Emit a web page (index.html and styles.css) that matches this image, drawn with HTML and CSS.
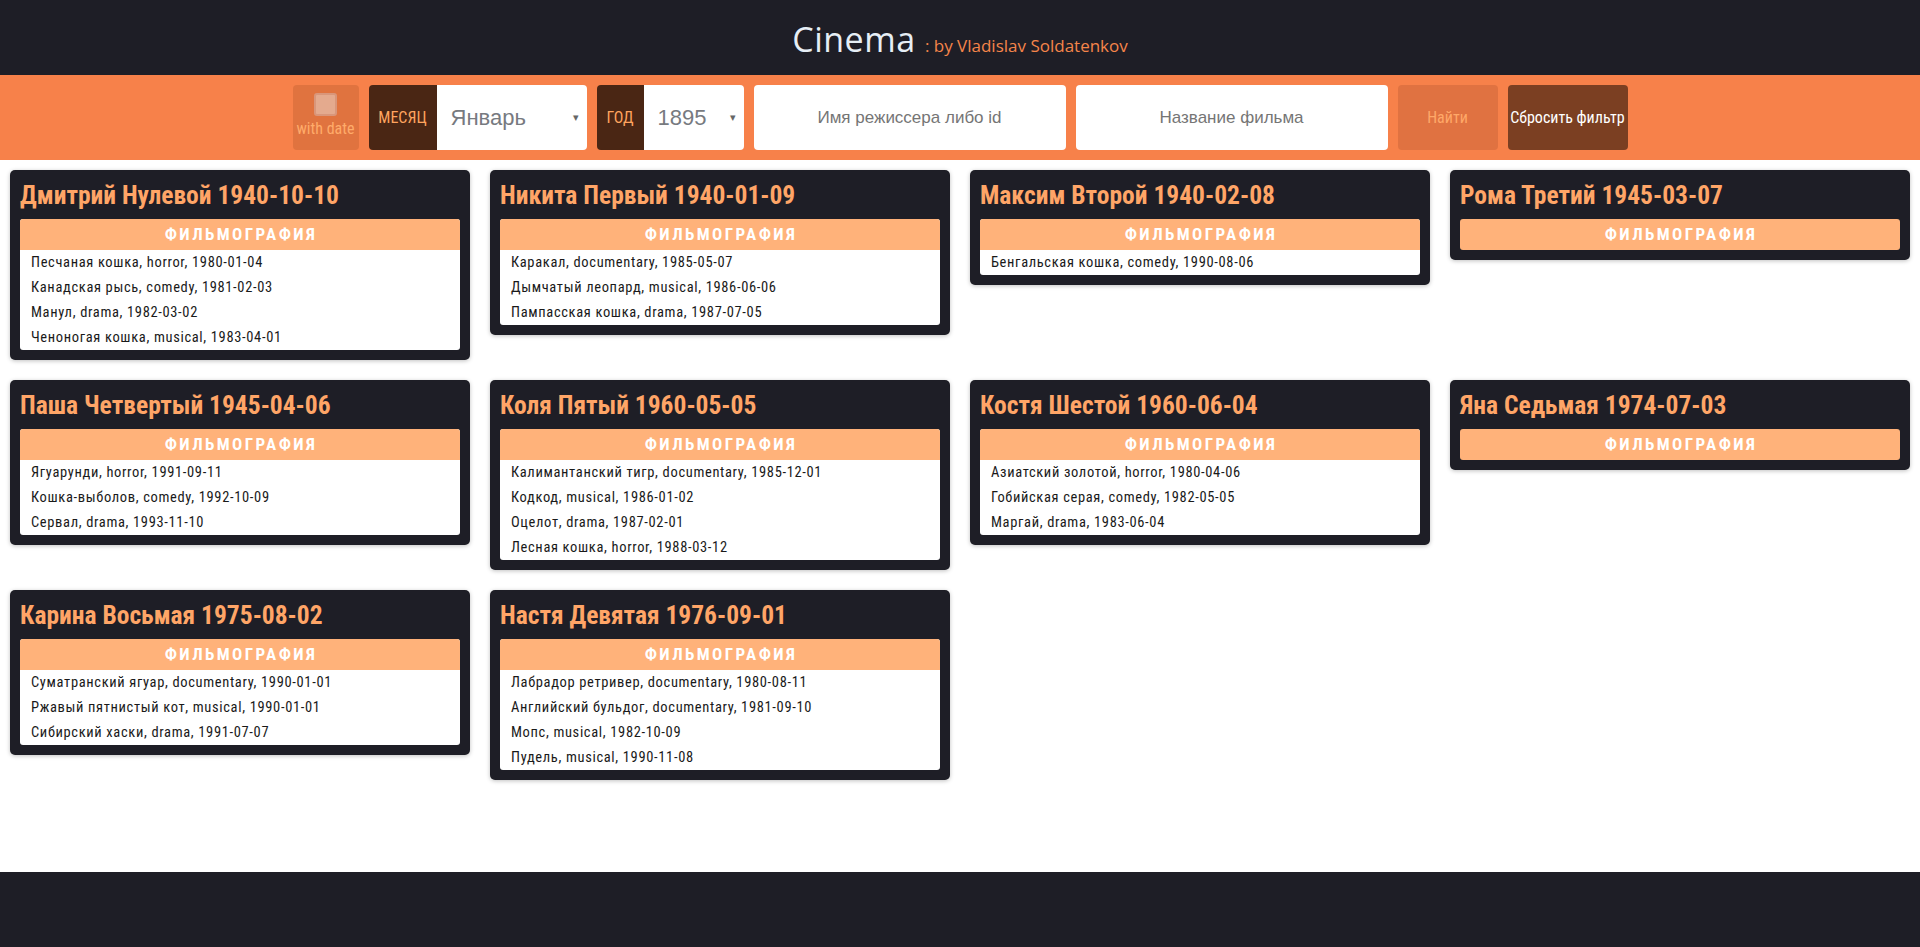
FILE: index.html
```html
<!DOCTYPE html>
<html lang="ru">
<head>
<meta charset="utf-8">
<title>Cinema</title>
<link rel="stylesheet" href="styles.css">
</head>
<body>
<div class="page">
  <header class="topbar">
    <h1 class="logo">Cinema <span class="logo-sub">: by Vladislav Soldatenkov</span></h1>
  </header>
  <nav class="filters">
    <label class="withdate">
      <span class="box"></span>
      <span class="withdate-text">with date</span>
    </label>
    <div class="select-group month">
      <span class="select-label">МЕСЯЦ</span>
      <div class="select-box"><span class="select-value">Январь</span><span class="caret">▾</span></div>
    </div>
    <div class="select-group year">
      <span class="select-label">ГОД</span>
      <div class="select-box"><span class="select-value">1895</span><span class="caret">▾</span></div>
    </div>
    <div class="text-input">Имя режиссера либо id</div>
    <div class="text-input">Название фильма</div>
    <button class="btn btn-find">Найти</button>
    <button class="btn btn-reset">Сбросить фильтр</button>
  </nav>
  <main class="cards">
    <section class="card">
      <h2 class="card-title">Дмитрий Нулевой 1940-10-10</h2>
      <div class="films">
        <div class="films-head">ФИЛЬМОГРАФИЯ</div>
        <ul class="films-list">
          <li>Песчаная кошка, horror, 1980-01-04</li>
          <li>Канадская рысь, comedy, 1981-02-03</li>
          <li>Манул, drama, 1982-03-02</li>
          <li>Ченоногая кошка, musical, 1983-04-01</li>
        </ul>
      </div>
    </section>
    <section class="card">
      <h2 class="card-title">Никита Первый 1940-01-09</h2>
      <div class="films">
        <div class="films-head">ФИЛЬМОГРАФИЯ</div>
        <ul class="films-list">
          <li>Каракал, documentary, 1985-05-07</li>
          <li>Дымчатый леопард, musical, 1986-06-06</li>
          <li>Пампасская кошка, drama, 1987-07-05</li>
        </ul>
      </div>
    </section>
    <section class="card">
      <h2 class="card-title">Максим Второй 1940-02-08</h2>
      <div class="films">
        <div class="films-head">ФИЛЬМОГРАФИЯ</div>
        <ul class="films-list">
          <li>Бенгальская кошка, comedy, 1990-08-06</li>
        </ul>
      </div>
    </section>
    <section class="card">
      <h2 class="card-title">Рома Третий 1945-03-07</h2>
      <div class="films">
        <div class="films-head">ФИЛЬМОГРАФИЯ</div>
        <ul class="films-list"></ul>
      </div>
    </section>
    <section class="card">
      <h2 class="card-title">Паша Четвертый 1945-04-06</h2>
      <div class="films">
        <div class="films-head">ФИЛЬМОГРАФИЯ</div>
        <ul class="films-list">
          <li>Ягуарунди, horror, 1991-09-11</li>
          <li>Кошка-выболов, comedy, 1992-10-09</li>
          <li>Сервал, drama, 1993-11-10</li>
        </ul>
      </div>
    </section>
    <section class="card">
      <h2 class="card-title">Коля Пятый 1960-05-05</h2>
      <div class="films">
        <div class="films-head">ФИЛЬМОГРАФИЯ</div>
        <ul class="films-list">
          <li>Калимантанский тигр, documentary, 1985-12-01</li>
          <li>Кодкод, musical, 1986-01-02</li>
          <li>Оцелот, drama, 1987-02-01</li>
          <li>Лесная кошка, horror, 1988-03-12</li>
        </ul>
      </div>
    </section>
    <section class="card">
      <h2 class="card-title">Костя Шестой 1960-06-04</h2>
      <div class="films">
        <div class="films-head">ФИЛЬМОГРАФИЯ</div>
        <ul class="films-list">
          <li>Азиатский золотой, horror, 1980-04-06</li>
          <li>Гобийская серая, comedy, 1982-05-05</li>
          <li>Маргай, drama, 1983-06-04</li>
        </ul>
      </div>
    </section>
    <section class="card">
      <h2 class="card-title">Яна Седьмая 1974-07-03</h2>
      <div class="films">
        <div class="films-head">ФИЛЬМОГРАФИЯ</div>
        <ul class="films-list"></ul>
      </div>
    </section>
    <section class="card">
      <h2 class="card-title">Карина Восьмая 1975-08-02</h2>
      <div class="films">
        <div class="films-head">ФИЛЬМОГРАФИЯ</div>
        <ul class="films-list">
          <li>Суматранский ягуар, documentary, 1990-01-01</li>
          <li>Ржавый пятнистый кот, musical, 1990-01-01</li>
          <li>Сибирский хаски, drama, 1991-07-07</li>
        </ul>
      </div>
    </section>
    <section class="card">
      <h2 class="card-title">Настя Девятая 1976-09-01</h2>
      <div class="films">
        <div class="films-head">ФИЛЬМОГРАФИЯ</div>
        <ul class="films-list">
          <li>Лабрадор ретривер, documentary, 1980-08-11</li>
          <li>Английский бульдог, documentary, 1981-09-10</li>
          <li>Мопс, musical, 1982-10-09</li>
          <li>Пудель, musical, 1990-11-08</li>
        </ul>
      </div>
    </section>
  </main>
  <footer class="footer"></footer>
</div>
</body>
</html>
```
FILE: styles.css
```css
* { box-sizing: border-box; }
html, body { margin: 0; padding: 0; }
body {
  background: #ffffff;
  font-family: "Roboto Condensed", Roboto, "Liberation Sans", sans-serif;
}
.page {
  min-height: 100vh;
  display: flex;
  flex-direction: column;
}
.topbar {
  height: 75px;
  background: #1e1e26;
  display: flex;
  align-items: center;
  justify-content: center;
}
.logo {
  margin: 0;
  font-family: "Open Sans", "Liberation Sans", sans-serif;
  font-weight: 400;
  font-size: 34px;
  color: #e6eef5;
  letter-spacing: 0.5px;
  padding-top: 2px;
}
.logo-sub {
  font-size: 17px;
  color: #f5854a;
  letter-spacing: 0;
}
.filters {
  background: #f7814a;
  height: 85px;
  padding: 10px 0;
  display: flex;
  justify-content: center;
  gap: 10px;
}
.withdate {
  width: 66px;
  background: #e0733f;
  border-radius: 4px;
  display: flex;
  flex-direction: column;
  align-items: center;
  padding-top: 8px;
}
.box {
  width: 23px;
  height: 23px;
  border-radius: 3px;
  background: #e4aa8e;
  border: 2px solid #d9967a;
}
.withdate-text {
  margin-top: 3px;
  font-size: 16px;
  color: #ffab6a;
}
.select-group {
  display: flex;
  border-radius: 4px;
  overflow: hidden;
}
.month { width: 218px; }
.year { width: 147px; }
.select-label {
  background: #4a2614;
  color: #ffa45f;
  font-size: 16px;
  display: flex;
  align-items: center;
  justify-content: center;
}
.month .select-label { width: 68px; }
.year .select-label { width: 47px; }
.select-box {
  flex: 1;
  background: #ffffff;
  display: flex;
  align-items: center;
  padding: 0 8px 0 14px;
  font-family: "Liberation Sans", Arial, sans-serif;
}
.select-value {
  flex: 1;
  font-size: 22px;
  color: #777a80;
}
.caret {
  font-size: 11px;
  color: #666;
}
.text-input {
  width: 312px;
  background: #ffffff;
  border-radius: 4px;
  display: flex;
  align-items: center;
  justify-content: center;
  font-family: "Liberation Sans", Arial, sans-serif;
  font-size: 17px;
  color: #757575;
}
.btn {
  border: 0;
  border-radius: 4px;
  font-family: "Roboto Condensed", Roboto, "Liberation Sans", sans-serif;
  font-size: 16px;
  padding: 0;
}
.btn-find {
  width: 100px;
  background: #e07241;
  color: #ffa868;
}
.btn-reset {
  width: 120px;
  background: #7b3f22;
  color: #ffffff;
  font-weight: 400;
}
.cards {
  flex: 1;
  display: flex;
  flex-wrap: wrap;
  align-items: flex-start;
  align-content: flex-start;
}
.card {
  width: 460px;
  margin: 10px;
  background: #1e1e26;
  border-radius: 5px;
  padding: 10px;
  box-shadow: 0 1px 4px rgba(0, 0, 0, 0.25);
}
.card-title {
  margin: 0 0 9px;
  font-size: 25.5px;
  line-height: 30px;
  font-weight: 700;
  color: #ffa567;
}
.films {
  background: #ffffff;
  border-radius: 3px;
  overflow: hidden;
}
.films-head {
  height: 31px;
  line-height: 31px;
  background: #ffb27a;
  color: #ffffff;
  text-align: center;
  font-weight: 700;
  font-size: 17px;
  letter-spacing: 2.4px;
  padding-left: 2px;
}
.films-list {
  list-style: none;
  margin: 0;
  padding: 0;
}
.films-list li {
  height: 25px;
  line-height: 25px;
  padding-left: 11px;
  font-size: 14.5px;
  letter-spacing: 0.65px;
  color: #1a1a1a;
}
.footer {
  height: 75px;
  background: #1e1e26;
}
```
